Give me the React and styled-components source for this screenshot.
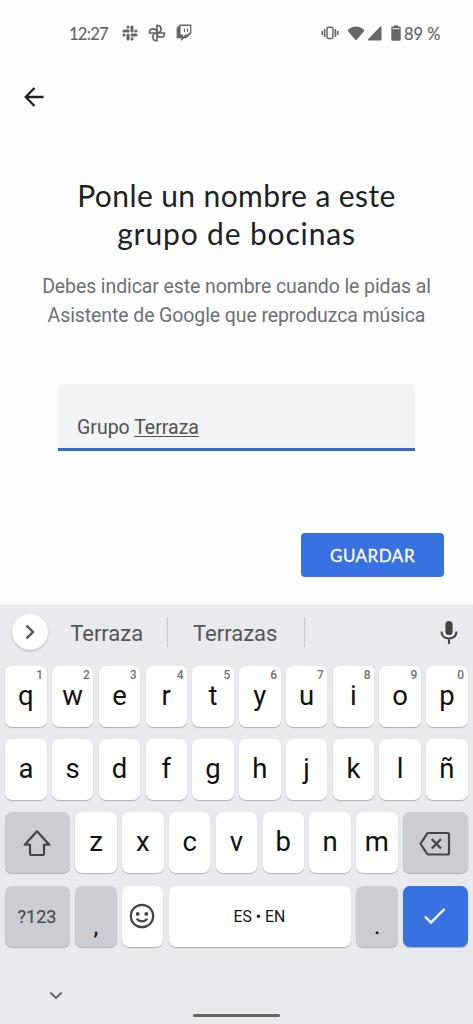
import React from 'react'
import { useState } from 'react';
import styled, { createGlobalStyle } from 'styled-components';

const numberRow = ['q', 'w', 'e', 'r', 't', 'y', 'u', 'i', 'o', 'p'];
const middleRow = ['a', 's', 'd', 'f', 'g', 'h', 'j', 'k', 'l', 'ñ'];
const bottomRow = ['z', 'x', 'c', 'v', 'b', 'n', 'm'];

const SlackIcon = () => (
  <svg width="16" height="16" viewBox="0 0 16 16" fill="none" stroke="#666" strokeWidth="3.1" strokeLinecap="round">
    <path d="M6 2V2.1M2 6H6.1M10 2V6M14 6H13.9M14 10H10M10 14V13.9M6 14V10M2 10H2.1" />
  </svg>
)

const PinwheelIcon = () => (
  <svg width="18" height="18" viewBox="0 0 18 18" fill="none" stroke="#666" strokeWidth="1.7" strokeLinejoin="round">
    <path d="M9 9V1.4C11.6 1.4 13.1 3 13.1 5.1C13.1 7.4 11.3 9 9 9Z" />
    <path d="M9 9H16.6C16.6 11.6 15 13.1 12.9 13.1C10.6 13.1 9 11.3 9 9Z" />
    <path d="M9 9V16.6C6.4 16.6 4.9 15 4.9 12.9C4.9 10.6 6.7 9 9 9Z" />
    <path d="M9 9H1.4C1.4 6.4 3 4.9 5.1 4.9C7.4 4.9 9 6.7 9 9Z" />
  </svg>
)

const TwitchIcon = () => (
  <svg width="16" height="18" viewBox="0 0 16 18">
    <path fill="#666" fillRule="evenodd" d="M3.6 .6H15.4V9.6L10.3 14.2H7.9L5.2 17V14.2H.6V4ZM4.6 1.9V10.6H7V12.7L9.2 10.6H11.4L14.1 8.2V1.9Z" />
    <path fill="#666" d="M7.9 4.4H9V8H7.9ZM11 4.4H12.1V8H11Z" />
  </svg>
)

const VibrateIcon = () => (
  <svg width="18" height="14" viewBox="0 0 18 14" fill="none" stroke="#666">
    <rect x="6" y="1.2" width="5.9" height="11.4" rx="1.6" strokeWidth="1.5" />
    <path strokeWidth="1.6" d="M3.6 3V11M14.4 3V11M1.3 5V9M16.7 5V9" />
  </svg>
)

const WifiIcon = () => (
  <svg width="18" height="15" viewBox="0 0 18 15" fill="#666">
    <path d="M9 .5C12.3 .5 15.2 1.8 17 3.9C17.3 4.4 17.2 4.8 16.9 5.3L10 13.6C9.3 14.4 8.7 14.4 8 13.6L1.1 5.3C.8 4.8 .7 4.4 1 3.9C2.8 1.8 5.7 .5 9 .5Z" />
  </svg>
)

const SignalIcon = () => (
  <svg width="15" height="15" viewBox="0 0 15 15" fill="#666">
    <path d="M14.5 1.2V13.5Q14.5 14.5 13.5 14.5H1.3Q.1 14.4 .8 13.4L13.1 .8Q14.3 0 14.5 1.2Z" />
  </svg>
)

const BatteryIcon = () => (
  <svg width="10" height="16" viewBox="0 0 10 16" fill="#666">
    <path fillRule="evenodd" d="M3 .3H7V1.6H8.7Q9.7 1.6 9.7 2.6V14.7Q9.7 15.7 8.7 15.7H1.3Q.3 15.7 .3 14.7V2.6Q.3 1.6 1.3 1.6H3ZM1.5 3.2V4.3H8.5V3.2Z" />
  </svg>
)

const BackIcon = () => (
  <svg width="20" height="20" viewBox="0 0 20 20" fill="none" stroke="#202124" strokeWidth="2.3">
    <path d="M19.5 10H2M10.5 1L1.7 10L10.5 19" />
  </svg>
)

const MicIcon = () => (
  <svg width="18" height="25" viewBox="0 0 18 25">
    <rect x="5.4" y="1" width="7.2" height="14" rx="3.6" fill="#444" />
    <path d="M1.5 11.5C1.5 15.8 4.8 18.5 9 18.5S16.5 15.8 16.5 11.5M9 18.5V24" fill="none" stroke="#444" strokeWidth="2.1" />
  </svg>
)

const ShiftIcon = () => (
  <svg width="28" height="26" viewBox="0 0 28 26" fill="none" stroke="#444548" strokeWidth="2.2" strokeLinejoin="round">
    <path d="M14 1.3L26.3 14.7H21V23.5Q21 25 19.5 25H8.5Q7 25 7 23.5V14.7H1.7Z" />
  </svg>
)

const DeleteIcon = () => (
  <svg width="32" height="26" viewBox="0 0 32 26" fill="none" stroke="#444548" strokeWidth="2.2" strokeLinejoin="round">
    <path d="M9.3 3H28.5Q30 3 30 4.5V23Q30 24.5 28.5 24.5H9.3Q8.6 24.5 8.2 23.9L1.5 13.75L8.2 3.6Q8.6 3 9.3 3Z" />
    <path strokeWidth="2.4" d="M12.8 9L22 18.5M22 9L12.8 18.5" />
  </svg>
)

const SmileIcon = () => (
  <svg width="26" height="26" viewBox="0 0 26 26" fill="none" stroke="#444" strokeWidth="2.2">
    <circle cx="13" cy="13" r="11.2" />
    <path d="M8.3 16.3Q13 20.3 17.7 16.3" strokeLinecap="round" />
    <circle cx="8.7" cy="10.9" r="1.9" fill="#444" stroke="none" />
    <circle cx="17.3" cy="10.9" r="1.9" fill="#444" stroke="none" />
  </svg>
)

const LetterKeys = ({ letters, hints, onType }) => (
  letters.map((letter, i) => (
    <Key key={letter} onClick={() => onType(letter)}>
      {hints && <Hint>{(i + 1) % 10}</Hint>}
      {letter}
    </Key>
  ))
)

export default function App() {
  const [word, setWord] = useState('Terraza');

  const handleType = (letter) => {
    setWord(word + letter);
  };

  return (
    <Screen>
      <GlobalStyle />
      <StatusBar>
        <Clock>12:27</Clock>
        <Notifications>
          <SlackIcon />
          <PinwheelIcon />
          <TwitchIcon />
        </Notifications>
        <Spacer />
        <VibrateIcon />
        <Network>
          <WifiIcon />
          <SignalIcon />
        </Network>
        <BatteryIcon />
        <Percent>89 %</Percent>
      </StatusBar>
      <TopBar>
        <BackIcon />
      </TopBar>
      <Title>
        <TitleLine $spacing={0.4}>Ponle un nombre a este</TitleLine>
        <TitleLine $spacing={0.85}>grupo de bocinas</TitleLine>
      </Title>
      <Description>
        Debes indicar este nombre cuando le pidas al<br />
        Asistente de Google que reproduzca música
      </Description>
      <Field>Grupo <Composing>{word}</Composing></Field>
      <Actions>
        <SaveButton>GUARDAR</SaveButton>
      </Actions>

      <Keyboard>
        <Suggestions>
          <Expand>
            <svg width="10" height="16" viewBox="0 0 10 16" fill="none" stroke="#555" strokeWidth="2.4">
              <path d="M1.5 1.5L8 8L1.5 14.5" />
            </svg>
          </Expand>
          <Suggestion $width={120} onClick={() => setWord('Terraza')}>Terraza</Suggestion>
          <Suggestion $width={137} onClick={() => setWord('Terrazas')}>Terrazas</Suggestion>
          <Spacer />
          <MicIcon />
        </Suggestions>
        <Row><LetterKeys letters={numberRow} hints onType={handleType} /></Row>
        <Row><LetterKeys letters={middleRow} onType={handleType} /></Row>
        <Row>
          <WideKey><ShiftIcon /></WideKey>
          <LetterKeys letters={bottomRow} onType={handleType} />
          <WideKey onClick={() => setWord(word.slice(0, -1))}><DeleteIcon /></WideKey>
        </Row>
        <Row>
          <WideKey>?123</WideKey>
          <MarkKey>,</MarkKey>
          <EmojiKey><SmileIcon /></EmojiKey>
          <SpaceKey onClick={() => handleType(' ')}>ES • EN</SpaceKey>
          <MarkKey>.</MarkKey>
          <EnterKey>
            <svg width="22" height="18" viewBox="0 0 22 18" fill="none" stroke="#fff" strokeWidth="2.3">
              <path d="M1 9.5L7 15.5L20.5 2" />
            </svg>
          </EnterKey>
        </Row>
        <NavBar>
          <svg width="14" height="9" viewBox="0 0 14 9" fill="none" stroke="#666" strokeWidth="1.9">
            <path d="M1.3 1.5L7 7L12.7 1.5" />
          </svg>
          <HomeBar />
        </NavBar>
      </Keyboard>
    </Screen>
  )
}

const GlobalStyle = createGlobalStyle`
  * {
    box-sizing: border-box;
  }
  body {
    margin: 0;
    background: #fefefe;
  }
  svg {
    flex: none;
    display: block;
  }
`;

const Screen = styled.div`
  width: 473px;
  height: 1024px;
  display: flex;
  flex-direction: column;
  overflow: hidden;
  background: #fefefe;
  font-family: Roboto, sans-serif;
`;

const StatusBar = styled.div`
  height: 66px;
  padding: 0 31px 0 69px;
  display: flex;
  align-items: center;
  gap: 9px;
  color: #666;
  font-family: Lato, sans-serif;
  font-size: 16.5px;
  line-height: 20px;
`;

const Clock = styled.span`
  width: 44px;
  padding-top: 1px;
  letter-spacing: -0.7px;
  -webkit-text-stroke: 0.2px #666;
`;

const Notifications = styled.div`
  display: flex;
  align-items: center;
  gap: 10px;
`;

const Percent = styled.span`
  width: 38px;
  margin-left: -5.5px;
  padding-top: 1px;
  -webkit-text-stroke: 0.2px #666;
  white-space: nowrap;
`;

const Network = styled.div`
  margin-left: -1px;
  display: flex;
  gap: 1.5px;
`;

const Spacer = styled.div`
  flex: 1;
`;

const TopBar = styled.div`
  height: 62px;
  padding-left: 24px;
  display: flex;
  align-items: center;
`;

const Title = styled.h1`
  margin: 48px 0 0;
  color: #202124;
  font-family: Lato, sans-serif;
  font-size: 30px;
  font-weight: 400;
  line-height: 38px;
  text-align: center;
  white-space: nowrap;
`;

const TitleLine = styled.span`
  display: block;
  letter-spacing: ${(props) => props.$spacing}px;
`;

const Description = styled.p`
  margin: 20px 0 0;
  color: #6d7074;
  font-size: 19.5px;
  line-height: 29px;
  letter-spacing: -0.1px;
  text-align: center;
  white-space: nowrap;
`;

const Field = styled.div`
  width: 357px;
  height: 67px;
  margin: 54px 0 0 58px;
  padding: 30px 19px 0;
  border-bottom: 3px solid #3367d6;
  border-radius: 5px 5px 0 0;
  background: #f1f3f4;
  color: #505153;
  font-size: 19.5px;
  line-height: 27px;
  white-space: nowrap;
`;

const Composing = styled.span`
  text-decoration: underline;
  text-decoration-thickness: 1px;
  text-underline-offset: 2px;
`;

const Actions = styled.div`
  margin-top: 82px;
  padding-right: 29px;
  display: flex;
  justify-content: flex-end;
`;

const SaveButton = styled.button`
  width: 143px;
  height: 44px;
  padding: 0;
  border: none;
  border-radius: 4px;
  background: #3871e0;
  color: #fff;
  font-family: Lato, sans-serif;
  font-size: 17px;
  letter-spacing: 0.5px;
  -webkit-text-stroke: 0.3px #fff;
`;

const Keyboard = styled.div`
  height: 419px;
  margin-top: auto;
  padding: 0 5.2px;
  display: flex;
  flex-direction: column;
  gap: 12.3px;
  background: #e8eaed;
  box-shadow: 0 -1px 2px rgba(0, 0, 0, 0.06);
`;

const Suggestions = styled.div`
  height: 54px;
  margin-bottom: -5.6px;
  padding: 0 10px 0 7px;
  display: flex;
  align-items: center;
`;

const Expand = styled.div`
  width: 36px;
  height: 36px;
  display: flex;
  align-items: center;
  justify-content: center;
  border-radius: 50%;
  background: #fff;
  box-shadow: 0 1px 2px rgba(0, 0, 0, 0.25);
`;

const Suggestion = styled.div`
  width: ${(props) => props.$width}px;
  height: 29px;
  padding: 2px 2px 0 0;
  display: flex;
  align-items: center;
  justify-content: center;
  border-right: 1px solid #c5c7ca;
  color: #555658;
  font-size: 22px;
`;

const Row = styled.div`
  height: 61px;
  display: flex;
  gap: 5.35px;
`;

const Key = styled.div`
  position: relative;
  flex: 0 0 41.45px;
  height: 61px;
  padding-bottom: 2px;
  display: flex;
  align-items: center;
  justify-content: center;
  border-radius: 7px;
  background: #fff;
  box-shadow: 0 1px 1px rgba(0, 0, 0, 0.25);
  color: #111;
  font-size: 27.5px;
`;

const Hint = styled.span`
  position: absolute;
  top: 2px;
  right: 3.5px;
  color: #707173;
  font-size: 12px;
  font-weight: 500;
  line-height: 14px;
`;

const WideKey = styled(Key)`
  flex: 1 1 0;
  padding: 0 1px 0 0;
  background: #cccdd2;
  color: #4a4b4e;
  font-size: 18px;
  -webkit-text-stroke: 0.2px #4a4b4e;
`;

const MarkKey = styled(Key)`
  padding: 21px 0 0;
  background: #cccdd2;
  font-size: 22px;
  -webkit-text-stroke: 0.3px #111;
`;

const EmojiKey = styled(Key)`
  padding: 0 1px 0 0;
`;

const SpaceKey = styled(Key)`
  flex: 0 0 182.5px;
  padding: 1px 1px 0 0;
  font-size: 15.8px;
`;

const EnterKey = styled(WideKey)`
  background: #3871e0;
`;

const NavBar = styled.div`
  position: relative;
  flex: 1;
  padding: 32px 0 0 44px;
`;

const HomeBar = styled.div`
  position: absolute;
  left: 188px;
  bottom: 7px;
  width: 87px;
  height: 3px;
  border-radius: 2px;
  background: #666;
`;
